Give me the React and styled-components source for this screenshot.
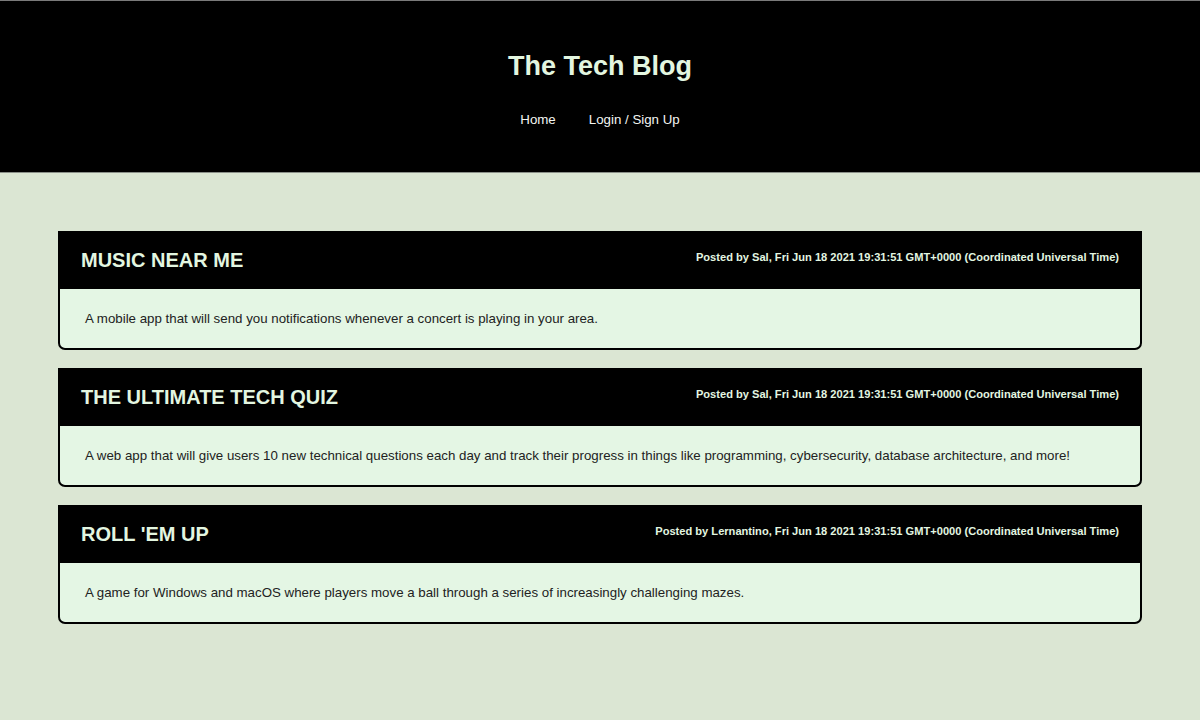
import React from "react";
import styled, { createGlobalStyle } from "styled-components";

const Global = createGlobalStyle`
  html, body { margin: 0; padding: 0; }
  body {
    background: #dbe6d3;
    font-family: "Liberation Sans", Arial, sans-serif;
    min-height: 720px;
  }
`;

const Header = styled.header`
  background: #000;
  border-top: 1px solid #7a7a7a;
  border-bottom: 1px solid #8a8f88;
  height: 173px;
  display: flex;
  flex-direction: column;
  align-items: center;
  box-sizing: border-box;
  padding-top: 48px;
`;

const Title = styled.h1`
  margin: 0;
  color: #e3f6e0;
  font-size: 27px;
  font-weight: bold;
  line-height: 34px;
`;

const Nav = styled.nav`
  display: flex;
  gap: 33px;
  margin-top: 27px;
`;

const NavLink = styled.a`
  color: #f4f6f2;
  font-size: 13.3px;
  line-height: 20px;
  text-decoration: none;
`;

const Main = styled.main`
  padding: 58px 58px 0 58px;
  display: flex;
  flex-direction: column;
  gap: 18px;
`;

const Card = styled.article`
  border: 2px solid #000;
  border-radius: 0 0 7px 7px;
  overflow: hidden;
  background: #e4f6e4;
`;

const CardHead = styled.div`
  background: #000;
  height: 56px;
  display: flex;
  align-items: center;
  justify-content: space-between;
  padding: 0 21px 0 21px;
`;

const CardTitle = styled.h2`
  margin: -2px 0 0 0;
  color: #e3f6e0;
  font-size: 20px;
  font-weight: bold;
`;

const Meta = styled.span`
  color: #e3f6e0;
  font-size: 11.1px;
  font-weight: bold;
  margin-top: -8px;
`;

const CardBody = styled.p`
  margin: 0;
  height: 59px;
  display: flex;
  align-items: center;
  padding: 0 25px;
  font-size: 13.3px;
  color: #222;
`;

const posts = [
  {
    title: "MUSIC NEAR ME",
    author: "Sal",
    body: "A mobile app that will send you notifications whenever a concert is playing in your area.",
  },
  {
    title: "THE ULTIMATE TECH QUIZ",
    author: "Sal",
    body: "A web app that will give users 10 new technical questions each day and track their progress in things like programming, cybersecurity, database architecture, and more!",
  },
  {
    title: "ROLL 'EM UP",
    author: "Lernantino",
    body: "A game for Windows and macOS where players move a ball through a series of increasingly challenging mazes.",
  },
];

export default function App() {
  return (
    <>
      <Global />
      <Header>
        <Title>The Tech Blog</Title>
        <Nav>
          <NavLink href="#">Home</NavLink>
          <NavLink href="#">Login / Sign Up</NavLink>
        </Nav>
      </Header>
      <Main>
        {posts.map((p) => (
          <Card key={p.title}>
            <CardHead>
              <CardTitle>{p.title}</CardTitle>
              <Meta>
                Posted by {p.author}, Fri Jun 18 2021 19:31:51 GMT+0000 (Coordinated Universal Time)
              </Meta>
            </CardHead>
            <CardBody>{p.body}</CardBody>
          </Card>
        ))}
      </Main>
    </>
  );
}
